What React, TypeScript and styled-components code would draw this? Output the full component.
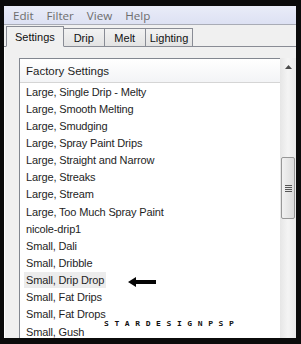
import styled, { createGlobalStyle } from 'styled-components';

const GlobalStyle = createGlobalStyle`
  html, body {
    margin: 0;
    padding: 0;
    background: #0b0b0b;
  }
`;

const menuItems = ['Edit', 'Filter', 'View', 'Help'];
const tabs = ['Settings', 'Drip', 'Melt', 'Lighting'];
const presets = [
  'Large, Single Drip - Melty',
  'Large, Smooth Melting',
  'Large, Smudging',
  'Large, Spray Paint Drips',
  'Large, Straight and Narrow',
  'Large, Streaks',
  'Large, Stream',
  'Large, Too Much Spray Paint',
  'nicole-drip1',
  'Small, Dali',
  'Small, Dribble',
  'Small, Drip Drop',
  'Small, Fat Drips',
  'Small, Fat Drops',
  'Small, Gush',
];

export default function App() {
  return (
    <Frame>
      <GlobalStyle />
      <Window>
        <MenuBar>
          {menuItems.map((m) => (
            <MenuItem key={m}>{m}</MenuItem>
          ))}
        </MenuBar>
        <TabStrip>
          {tabs.map((t, i) => (
            <Tab key={t} $active={i === 0}>
              {t}
            </Tab>
          ))}
        </TabStrip>
        <Panel>
          <ListBox>
            <ListColumn>
              <ListHeader>Factory Settings</ListHeader>
              {presets.map((p) => (
                <Row key={p}>
                  <RowLabel $selected={p === 'Small, Drip Drop'}>{p}</RowLabel>
                </Row>
              ))}
            </ListColumn>
            <ScrollBar>
              <ScrollArrow>
                <svg width="7" height="4" viewBox="0 0 7 4">
                  <path d="M0 4 L3.5 0 L7 4 Z" fill="#4a4a4a" />
                </svg>
              </ScrollArrow>
              <Track>
                <Thumb>
                  <Grip />
                  <Grip />
                  <Grip />
                  <Grip />
                </Thumb>
              </Track>
              <ScrollArrow>
                <svg width="7" height="4" viewBox="0 0 7 4">
                  <path d="M0 0 L3.5 4 L7 0 Z" fill="#4a4a4a" />
                </svg>
              </ScrollArrow>
            </ScrollBar>
          </ListBox>
          <Pointer>
            <svg width="28" height="10" viewBox="0 0 28 10">
              <path d="M0 5 L8 0 L8 3 L28 3 L28 7 L8 7 L8 10 Z" fill="#050505" />
            </svg>
          </Pointer>
          <Watermark>STARDESIGNPSP</Watermark>
        </Panel>
      </Window>
    </Frame>
  );
}

const Frame = styled.div`
  width: 301px;
  height: 344px;
  box-sizing: border-box;
  padding: 6px 5px 6px 4px;
  background: #0b0b0b;
  display: flex;
  overflow: hidden;
`;

const Window = styled.div`
  flex: 1;
  display: flex;
  flex-direction: column;
  background: #f0f0f0;
  overflow: hidden;
  font-family: 'Liberation Sans', Arial, sans-serif;
  font-size: 11px;
`;

const MenuBar = styled.div`
  height: 18px;
  display: flex;
  align-items: center;
  gap: 13px;
  padding-left: 9px;
  background: linear-gradient(#e9ecf8, #dde1f3);
  border-bottom: 1px solid #a9acb6;
`;

const MenuItem = styled.span`
  color: #6d6d6d;
  font-family: 'Open Sans', 'Liberation Sans', sans-serif;
  font-size: 11.6px;
`;

const TabStrip = styled.div`
  display: flex;
  align-items: flex-end;
  padding: 2px 0 0 2px;
  height: 22px;
  box-sizing: border-box;
  border-bottom: 1px solid #898c95;
`;

const Tab = styled.div<{ $active?: boolean }>`
  height: ${(p) => (p.$active ? '21px' : '18px')};
  box-sizing: border-box;
  padding: ${(p) => (p.$active ? '0 8px' : '0 4px')};
  display: flex;
  align-items: center;
  color: #111;
  font-size: 11px;
  border: 1px solid #898c95;
  border-bottom: ${(p) => (p.$active ? '1px solid #f0f0f0' : 'none')};
  margin-bottom: ${(p) => (p.$active ? '-1px' : '0')};
  margin-left: ${(p) => (p.$active ? '0' : '-1px')};
  background: ${(p) => (p.$active ? '#f0f0f0' : 'linear-gradient(#f2f2f2, #e3e3e3)')};
  min-width: ${(p) => (p.$active ? 'auto' : '42px')};
  justify-content: center;
  position: relative;
  z-index: ${(p) => (p.$active ? 1 : 0)};
`;

const Panel = styled.div`
  flex: 1;
  position: relative;
  padding: 11px 0 0 14px;
  border-left: 1px solid #ffffff;
  overflow: hidden;
`;

const ListBox = styled.div`
  display: flex;
  height: 320px;
  background: #fff;
  border: 1px solid #828790;
  border-right: none;
`;

const ListColumn = styled.div`
  flex: 1;
  display: flex;
  flex-direction: column;
`;

const ListHeader = styled.div`
  height: 23px;
  display: flex;
  align-items: center;
  padding-left: 6px;
  color: #1e1e1e;
  font-size: 11.5px;
  background: linear-gradient(#ffffff, #f3f4f6);
  border-bottom: 1px solid #d5d5d5;
`;

const Row = styled.div`
  height: 17.15px;
  display: flex;
  align-items: center;
  padding-left: 4px;
  &:first-of-type {
    margin-top: 1px;
  }
`;

const RowLabel = styled.span<{ $selected?: boolean }>`
  padding: 0 2px;
  line-height: 16px;
  color: #1e1e1e;
  font-size: 11px;
  letter-spacing: -0.15px;
  background: ${(p) => (p.$selected ? '#ececec' : 'transparent')};
`;

const ScrollBar = styled.div`
  width: 16px;
  display: flex;
  flex-direction: column;
  background: linear-gradient(90deg, #e6e6e6, #f4f4f4 50%, #e9e9e9);
  margin-top: -1px;
`;

const ScrollArrow = styled.div`
  height: 17px;
  display: flex;
  align-items: center;
  justify-content: center;
`;

const Track = styled.div`
  flex: 1;
  padding-top: 82px;
`;

const Thumb = styled.div`
  margin: 0 1px;
  height: 62px;
  box-sizing: border-box;
  border: 1px solid #979797;
  border-radius: 2px;
  background: linear-gradient(90deg, #f1f1f1, #dcdcdc);
  display: flex;
  flex-direction: column;
  align-items: center;
  justify-content: center;
  gap: 1px;
`;

const Grip = styled.div`
  width: 7px;
  height: 1px;
  background: #555;
`;

const Pointer = styled.div`
  position: absolute;
  left: 123px;
  top: 230px;
  line-height: 0;
`;

const Watermark = styled.div`
  position: absolute;
  left: 99px;
  top: 272px;
  font-family: 'DejaVu Sans Mono', monospace;
  font-size: 8px;
  font-weight: bold;
  letter-spacing: 5.6px;
  color: #111;
  transform: scaleY(0.9);
`;
